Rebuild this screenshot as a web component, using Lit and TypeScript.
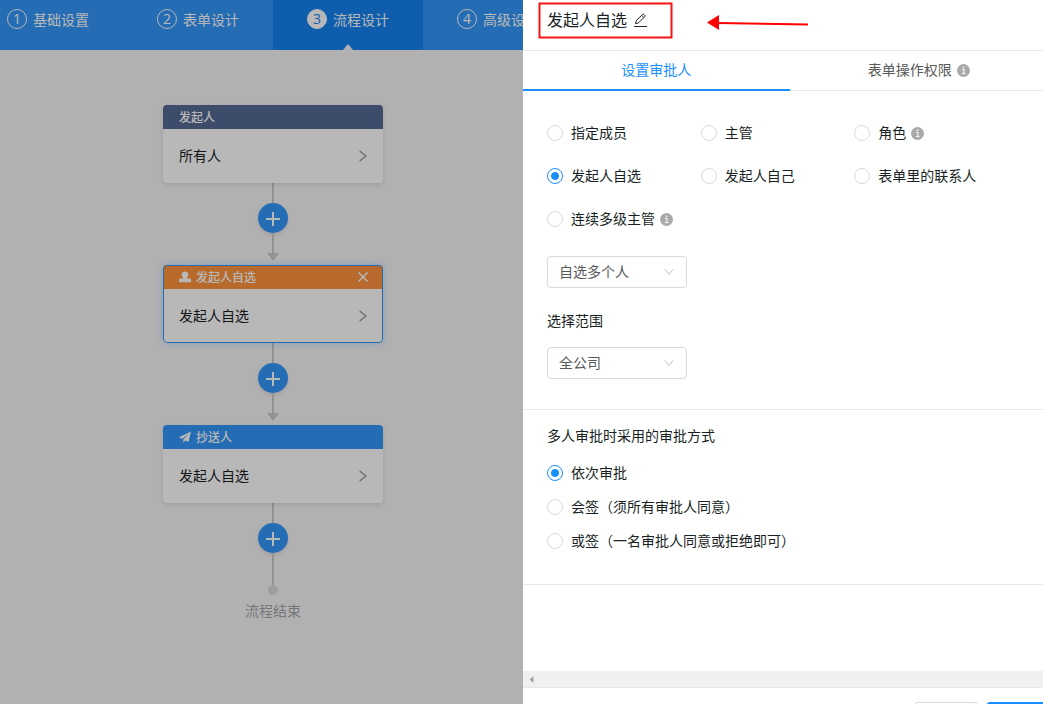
import { LitElement, html, css, svg, nothing } from "lit";
import { customElement, state } from "lit/decorators.js";
import { classMap } from "lit/directives/class-map.js";

interface FlowNode {
  kind: "start" | "approver" | "notifier";
  title: string;
  content: string;
}

const steps = ["基础设置", "表单设计", "流程设计", "高级设置"];

const nodes: FlowNode[] = [
  { kind: "start", title: "发起人", content: "所有人" },
  { kind: "approver", title: "发起人自选", content: "发起人自选" },
  { kind: "notifier", title: "抄送人", content: "发起人自选" },
];

const approverTypes = [
  { label: "指定成员" },
  { label: "主管" },
  { label: "角色", info: true },
  { label: "发起人自选" },
  { label: "发起人自己" },
  { label: "表单里的联系人" },
  { label: "连续多级主管", info: true },
];

const modes = ["依次审批", "会签（须所有审批人同意）", "或签（一名审批人同意或拒绝即可）"];

const font = css`"Noto Sans CJK SC", "Liberation Sans", sans-serif`;

const infoIcon = html`<svg class="info" width="13" height="13" viewBox="0 0 13 13" aria-hidden="true">
  <circle cx="6.5" cy="6.5" r="6.5" fill="#a9a9a9"></circle>
  <path d="M5 5.5h2v4M4.8 9.6h3.6" stroke="#fff" fill="none"></path>
  <circle cx="6.5" cy="3.4" r="0.8" fill="#fff"></circle>
</svg>`;

const userIcon = html`<svg width="12" height="12" viewBox="0 0 12 12" aria-hidden="true">
  <path fill="currentColor" d="M6 0.500c2.100 0 3.300 1.400 3.300 3.200 0 1.300-.6 2.300-1.500 2.900v.9h2.700c1 0 1.500.6 1.500 1.500v1.700c0 .4-.2.600-.6.600H.6c-.4 0-.6-.2-.6-.6V9c0-.9.500-1.500 1.500-1.500h2.700v-.9c-.9-.6-1.500-1.600-1.500-2.900C2.700 1.900 3.900.500 6 .500z"></path>
</svg>`;

const planeIcon = html`<svg width="12" height="12" viewBox="0 0 12 12" aria-hidden="true">
  <path fill="currentColor" d="M12 0.500 0 6.300 3 7.900 9.600 3 4.300 8.500v3.200l1.900-2.100 3.300 1.500z"></path>
</svg>`;

@customElement("flow-node")
export class FlowNodeCard extends LitElement {
  static properties = { node: { attribute: false } };
  declare node: FlowNode;

  static styles = css`
    :host {
      display: block;
      width: 220px;
    }
    .card {
      position: relative;
      border-radius: 4px;
      background: #fff;
      box-shadow: 0 2px 5px rgba(0, 0, 0, 0.1);
      overflow: hidden;
    }
    .card.selected {
      box-shadow: 0 0 6px rgba(50, 150, 250, 0.3);
    }
    .card.selected::after {
      content: "";
      position: absolute;
      inset: 0;
      border: 1px solid #3296fa;
      border-radius: 4px;
      pointer-events: none;
    }
    .head {
      display: flex;
      align-items: center;
      gap: 5px;
      height: 24px;
      padding: 0 14px 0 16px;
      color: #fff;
      font-size: 12px;
      font-weight: 500;
    }
    .start {
      background: #576a95;
    }
    .approver {
      background: #ff943e;
    }
    .notifier {
      background: #3296fa;
    }
    .title {
      flex: 1;
    }
    .close {
      display: flex;
      padding: 0;
      border: 0;
      background: none;
      color: inherit;
    }
    .body {
      display: flex;
      align-items: center;
      justify-content: space-between;
      width: 100%;
      height: 54px;
      padding: 0 16px;
      border: 0;
      background: none;
      color: #191f25;
      font: inherit;
      font-size: 14px;
      text-align: left;
    }
    .text {
      padding-bottom: 2px;
    }
  `;

  render() {
    const { kind, title, content } = this.node;
    return html`<section class=${classMap({ card: true, selected: kind === "approver" })}>
      <div class="head ${kind}">
        ${kind === "approver" ? userIcon : kind === "notifier" ? planeIcon : nothing}
        <span class="title">${title}</span>
        ${kind === "approver"
          ? html`<button class="close" aria-label="删除">
              <svg width="12" height="12" viewBox="0 0 12 12">
                <path d="M1.500 1.500l9 9M10.500 1.500l-9 9" stroke="currentColor" stroke-width="1.500"></path>
              </svg>
            </button>`
          : nothing}
      </div>
      <button class="body">
        <span class="text">${content}</span>
        <svg width="8" height="12" viewBox="0 0 8 12">
          <path d="M0.700 1l6.300 5-6.300 5" fill="none" stroke="#979797" stroke-width="1.300"></path>
        </svg>
      </button>
    </section>`;
  }
}

@customElement("flow-link")
export class FlowLink extends LitElement {
  static properties = { last: { type: Boolean } };
  declare last: boolean;

  static styles = css`
    :host {
      display: flex;
      flex-direction: column;
      align-items: center;
    }
    .line {
      width: 2px;
      height: 20px;
      background: #cacaca;
    }
    .long {
      height: 32px;
    }
    .add {
      display: flex;
      align-items: center;
      justify-content: center;
      width: 30px;
      height: 30px;
      padding: 0;
      border: 0;
      border-radius: 50%;
      background: #3296fa;
      box-shadow: 0 2px 4px rgba(0, 0, 0, 0.1);
    }
    .arrow {
      margin-bottom: 4px;
    }
  `;

  render() {
    return html`<div class="line"></div>
      <button class="add" aria-label="添加节点">
        <svg width="16" height="16" viewBox="0 0 16 16">
          <path d="M1 9h14M8 2v14" stroke="#fff" stroke-width="2"></path>
        </svg>
      </button>
      <div class=${classMap({ line: true, long: this.last })}></div>
      ${this.last
        ? nothing
        : html`<svg class="arrow" width="12" height="8" viewBox="0 0 12 8">
            <path d="M0 0h12L6 8z" fill="#cacaca"></path>
          </svg>`}`;
  }
}

@customElement("app-root")
export class AppRoot extends LitElement {
  @state() private type = "发起人自选";
  @state() private mode = "依次审批";

  static styles = css`
    :host {
      display: flex;
      height: 100vh;
      overflow: hidden;
      color: #191f25;
      font-family: ${font};
      font-size: 14px;
      line-height: 22px;
    }
    * {
      box-sizing: border-box;
    }
    .workspace {
      position: relative;
      flex: 1;
      min-width: 0;
      overflow: hidden;
      background: #f5f5f7;
    }
    .mask {
      position: absolute;
      inset: 0;
      background: rgba(0, 0, 0, 0.28);
    }
    .page {
      margin-right: -23px;
    }
    .steps {
      display: flex;
      justify-content: center;
      height: 50px;
      background: #3296fa;
    }
    .step {
      position: relative;
      display: flex;
      flex: none;
      align-items: center;
      gap: 6px;
      width: 150px;
      padding: 0 0 12px 34px;
      color: #fff;
      text-decoration: none;
    }
    .step.on {
      background: #1583f2;
    }
    .step.on::after {
      content: "";
      position: absolute;
      bottom: 0;
      left: 70px;
      border: 5px solid transparent;
      border-top-width: 0;
      border-bottom: 6px solid #f5f5f7;
    }
    .num {
      display: flex;
      align-items: center;
      justify-content: center;
      width: 20px;
      height: 20px;
      border: 1px solid #fff;
      border-radius: 50%;
      font-family: "Open Sans", "Noto Sans", sans-serif;
    }
    .on .num {
      background: #fff;
      color: #1583f2;
    }
    .flow {
      display: flex;
      flex-direction: column;
      align-items: center;
      padding-top: 55px;
    }
    .dot {
      width: 10px;
      height: 10px;
      border-radius: 50%;
      background: #dbdcdc;
    }
    .end {
      margin-top: 4px;
      color: rgba(25, 31, 37, 0.4);
    }
    .drawer {
      display: flex;
      flex: none;
      flex-direction: column;
      width: 520px;
      overflow: hidden;
      background: #fff;
    }
    .top {
      position: relative;
      display: flex;
      align-items: center;
      gap: 6px;
      height: 51px;
      padding: 0 24px 10px;
      border-bottom: 1px solid #e8e8e8;
    }
    .top h1 {
      margin: 0;
      padding-bottom: 2px;
      font-size: 16px;
      font-weight: 400;
    }
    .edit {
      display: flex;
      padding: 0;
      border: 0;
      background: none;
    }
    .marks {
      position: absolute;
      top: 0;
      left: 0;
      pointer-events: none;
    }
    .wide {
      flex: none;
      width: calc(100% + 13px);
    }
    .tabs {
      display: grid;
      grid-template-columns: 1fr 1fr;
      height: 40px;
      border-bottom: 1px solid #e8e8e8;
    }
    .tab {
      display: flex;
      align-items: center;
      justify-content: center;
      gap: 5px;
      height: 40px;
      padding: 0 8px 2px 0;
      border: 0;
      background: none;
      color: #595959;
      font: inherit;
    }
    .tab.on {
      padding: 0;
      border-bottom: 2px solid #1890ff;
      color: #1890ff;
    }
    .tab span {
      padding-bottom: 2px;
    }
    .content {
      flex: 1;
      min-height: 0;
      overflow: hidden;
    }
    fieldset {
      min-width: 0;
      margin: 0;
      padding: 0;
      border: 0;
    }
    .section {
      padding: 31px 48px 30px 24px;
      border-bottom: 1px solid #e8e8e8;
    }
    .types {
      display: grid;
      grid-template-columns: repeat(3, 1fr);
      row-gap: 21px;
    }
    .radio {
      display: flex;
      align-items: center;
      gap: 8px;
    }
    .radio input {
      width: 16px;
      height: 16px;
      margin: 0;
      appearance: none;
      border: 1px solid #d9d9d9;
      border-radius: 50%;
      background: #fff;
    }
    .radio input:checked {
      border-color: #1890ff;
      background: radial-gradient(circle, #1890ff 3.5px, #fff 4.5px);
    }
    .radio span {
      padding-bottom: 2px;
      line-height: 20px;
    }
    .radio .info {
      margin-left: -3px;
    }
    .select {
      position: relative;
      display: flex;
      align-items: center;
      width: 140px;
    }
    .select select {
      width: 100%;
      height: 32px;
      padding: 0 11px 2px;
      appearance: none;
      border: 1px solid #d9d9d9;
      border-radius: 4px;
      background: #fff;
      color: #595959;
      font: inherit;
    }
    .select svg {
      position: absolute;
      right: 13px;
      pointer-events: none;
    }
    .people {
      margin-top: 26px;
    }
    .label {
      display: block;
      margin: 21px 0 16px;
    }
    .modes {
      display: flex;
      flex-direction: column;
      gap: 12px;
      padding: 14px 24px 32px;
      border-bottom: 1px solid #e8e8e8;
    }
    .modes legend {
      float: left;
      margin-bottom: 4px;
      padding: 0;
    }
    .scroll {
      display: flex;
      flex: none;
      align-items: center;
      height: 16px;
      padding-left: 6px;
      background: #f0f0f0;
    }
    .actions {
      display: flex;
      flex: none;
      justify-content: flex-end;
      gap: 8px;
      height: 17px;
      padding-top: 14px;
      border-top: 1px solid #e8e8e8;
      overflow: hidden;
    }
    .btn {
      flex: none;
      width: 64px;
      height: 32px;
      border: 1px solid #d9d9d9;
      border-radius: 4px;
      background: #fff;
    }
    .btn.primary {
      margin-right: -7px;
      border-color: #1890ff;
      background: #1890ff;
    }
  `;

  private radio(group: string, label: string, checked: boolean, pick: () => void, info = false) {
    return html`<label class="radio">
      <input type="radio" name=${group} .checked=${checked} @change=${pick} />
      <span>${label}</span>
      ${info ? infoIcon : nothing}
    </label>`;
  }

  private select(id: string, cls: string, name: string, value: string) {
    return html`<div class="select ${cls}">
      <select id=${id} aria-label=${name}>
        <option>${value}</option>
      </select>
      <svg width="10" height="8" viewBox="0 0 10 8">
        <path d="M0.800 1.200l4.200 5.300 4.200-5.300" fill="none" stroke="#c4c4c4"></path>
      </svg>
    </div>`;
  }

  render() {
    return html`
      <main class="workspace">
        <div class="page">
          <nav class="steps">
            ${steps.map(
              (s, i) => html`<a href="#" class=${classMap({ step: true, on: i === 2 })}>
                <span class="num">${i + 1}</span><span>${s}</span>
              </a>`
            )}
          </nav>
          <div class="flow">
            ${nodes.map(
              (n, i) => html`<flow-node .node=${n}></flow-node>
                <flow-link ?last=${i === nodes.length - 1}></flow-link>`
            )}
            <div class="dot"></div>
            <div class="end">流程结束</div>
          </div>
        </div>
        <div class="mask"></div>
      </main>
      <aside class="drawer">
        <header class="top">
          <h1>发起人自选</h1>
          <button class="edit" aria-label="编辑">
            <svg width="15" height="15" viewBox="0 0 15 15" fill="none" stroke="#262626">
              <path d="M2.500 10.700l.8-3 6.300-6.300c.4-.4.9-.4 1.300 0l.9.900c.4.4.4.900 0 1.300l-6.300 6.300zM8.700 2.400l2.200 2.200M1 13.500h13"></path>
            </svg>
          </button>
          <svg class="marks" width="300" height="50" viewBox="0 0 300 50" aria-hidden="true">
            ${svg`<rect x="16.500" y="3.500" width="132" height="34" fill="none" stroke="#f51414" stroke-width="2"></rect>
            <path d="M194 23l91 1.500" stroke="#f00" stroke-width="2"></path>
            <path d="M184 22.500l12-7.500v15z" fill="#f00"></path>`}
          </svg>
        </header>
        <div class="tabs wide" role="tablist">
          <button class="tab on" role="tab" aria-selected="true"><span>设置审批人</span></button>
          <button class="tab" role="tab" aria-selected="false"><span>表单操作权限</span>${infoIcon}</button>
        </div>
        <div class="content">
          <div class="section wide">
            <fieldset class="types" aria-label="审批人类型">
              ${approverTypes.map((t) =>
                this.radio("type", t.label, this.type === t.label, () => (this.type = t.label), t.info)
              )}
            </fieldset>
            ${this.select("people", "people", "自选人数", "自选多个人")}
            <label class="label" for="scope">选择范围</label>
            ${this.select("scope", "", "选择范围", "全公司")}
          </div>
          <fieldset class="modes">
            <legend>多人审批时采用的审批方式</legend>
            ${modes.map((m) => this.radio("mode", m, this.mode === m, () => (this.mode = m)))}
          </fieldset>
        </div>
        <div class="scroll">
          <svg width="5" height="7" viewBox="0 0 5 7"><path d="M4.500 0v7L0.500 3.500z" fill="#a3a3a3"></path></svg>
        </div>
        <footer class="actions">
          <button class="btn" aria-label="取消"></button>
          <button class="btn primary" aria-label="保存"></button>
        </footer>
      </aside>
    `;
  }
}
